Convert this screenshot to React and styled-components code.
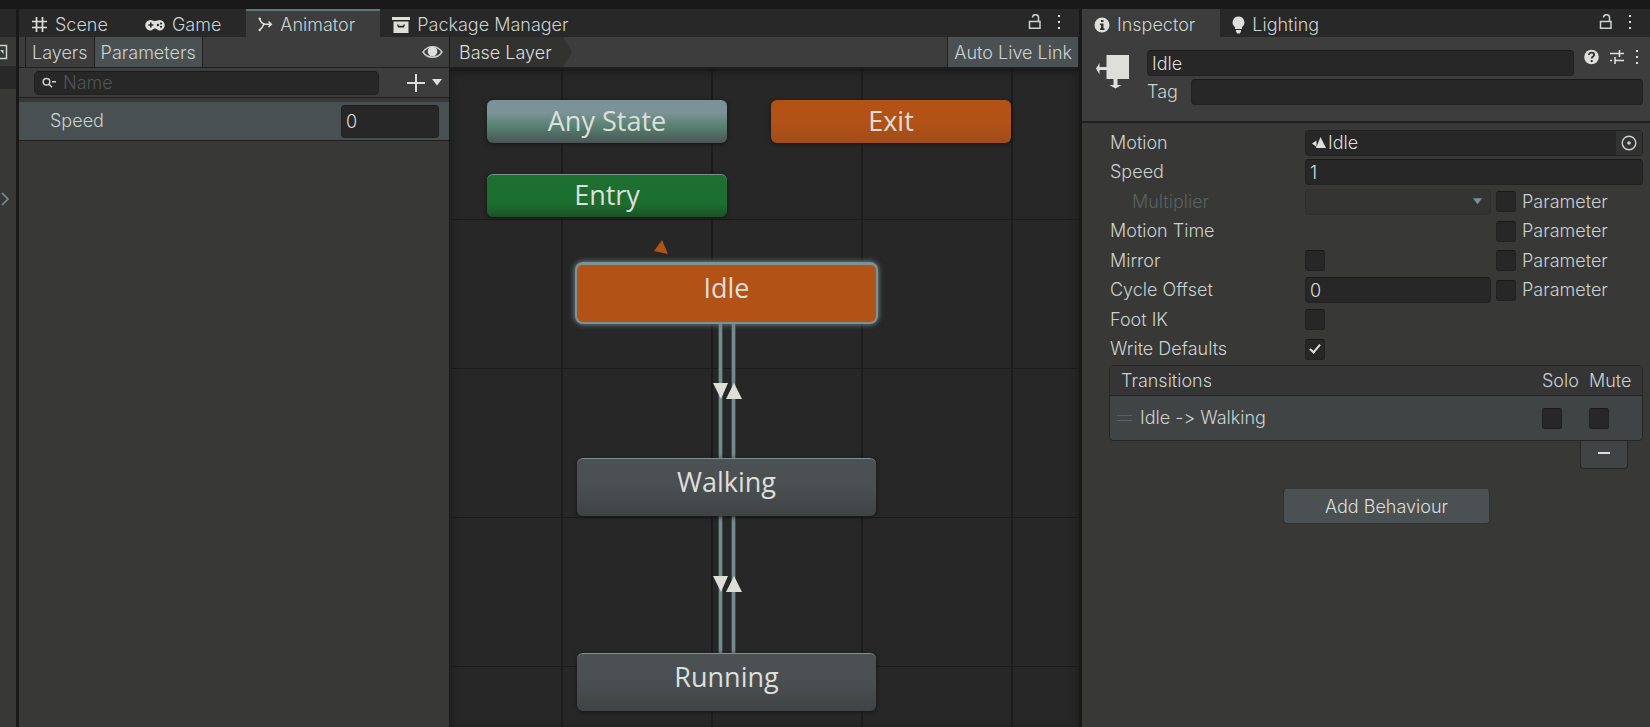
import React from "react";
import styled, { createGlobalStyle, css } from "styled-components";

const c = {
  edge: "#191919",
  strip: "#282828",
  panel: "#383836",
  bar: "#3c3d3c",
  line: "#1f1f1f",
  field: "#272727",
  select: "#4b5153",
  text: "#cbd2d1",
  bright: "#dededa",
  dim: "#5a6062",
  steel: "#7b9396",
  orange: "#b25217",
};

const GlobalStyle = createGlobalStyle`
  *, *::before, *::after { box-sizing: border-box; }
  body {
    margin: 0;
    background: ${c.edge};
    color: ${c.text};
    font: 300 18px/24px Inter, "Liberation Sans", sans-serif;
    font-feature-settings: "calt" 0;
  }
  button, input, select { font: inherit; color: inherit; }
  svg { display: block; flex: none; }
`;

const Editor = styled.div`
  display: grid;
  grid-template-columns: 16px minmax(0, 1060fr) minmax(0, 568fr);
  column-gap: 3px;
  min-height: 100vh;
  padding-top: 9px;
`;

const Window = styled.section`
  display: flex;
  flex-direction: column;
  min-width: 0;
  background: ${c.panel};
`;

const Dock = styled.aside`
  display: flex;
  flex-direction: column;
  overflow: hidden;
  background: ${c.panel};
`;

const DockCell = styled.div`
  display: flex;
  align-items: center;
  flex: none;
  height: ${(p) => p.$height}px;
  background: ${(p) => (p.$dark ? c.strip : "transparent")};
`;

const TabStrip = styled.div`
  display: flex;
  flex: none;
  height: 28px;
  background: ${c.strip};
`;

const Tab = styled.button`
  display: flex;
  align-items: center;
  gap: 7px;
  height: 28px;
  padding: 1px 25px 0 12px;
  border: 0;
  border-top: 2px solid transparent;
  background: transparent;
  white-space: nowrap;
  ${(p) =>
    p.$active &&
    css`
      background: ${c.bar};
      border-top-color: ${p.$focus ? "#657476" : c.bar};
    `}
`;

const StripTools = styled.div`
  display: flex;
  align-items: center;
  gap: 15px;
  margin-left: auto;
  padding: 0 18px 3px 0;
`;

const IconButton = styled.button`
  display: flex;
  align-items: center;
  padding: 0;
  border: 0;
  background: transparent;
`;

const AnimatorBody = styled.div`
  display: grid;
  grid-template-columns: minmax(0, 430fr) minmax(0, 629fr);
  flex: 1;
  column-gap: 1px;
  background: ${c.edge};
`;

const Pane = styled.div`
  display: flex;
  flex-direction: column;
  min-width: 0;
  background: ${c.panel};
`;

const Toolbar = styled.div`
  display: flex;
  flex: none;
  height: 31px;
  padding-left: ${(p) => p.$inset || 0}px;
  background: ${c.bar};
  border-bottom: 1px solid ${c.line};
`;

const ToolButton = styled.button`
  padding: 2px 6px 0;
  border: solid ${c.line};
  border-width: 0 1px;
  background: ${(p) => (p.$on ? c.select : "transparent")};
  white-space: nowrap;
  & + & { border-left: 0; }
`;

const EyeSlot = styled(IconButton)`
  margin-left: auto;
  padding-right: 6px;
`;

const SearchRow = styled.div`
  display: flex;
  align-items: center;
  flex: none;
  height: 30px;
  padding: 0 7px 0 15px;
  background: ${c.bar};
  border-bottom: 1px solid ${c.line};
`;

const SearchBox = styled.label`
  display: flex;
  align-items: center;
  flex: 1;
  gap: 7px;
  height: 24px;
  margin-right: 28px;
  padding: 0 7px;
  border: 1px solid #222222;
  border-top-color: #1a1a1a;
  border-radius: 5px;
  background: ${c.field};
`;

const SearchInput = styled.input`
  flex: 1;
  min-width: 0;
  padding: 0;
  border: 0;
  outline: 0;
  background: transparent;
  &::placeholder { color: #4f5557; opacity: 1; }
`;

const AddButton = styled(IconButton)`
  gap: 7px;
`;

const ParameterRow = styled.label`
  display: flex;
  align-items: center;
  justify-content: space-between;
  flex: none;
  height: 39px;
  margin-top: 4px;
  padding: 0 10px 0 31px;
  background: #495052;
  border-bottom: 1px solid ${c.line};
`;

const Field = styled.input`
  min-width: 0;
  width: ${(p) => (p.$width ? p.$width + "px" : "auto")};
  flex: ${(p) => (p.$width ? "none" : 1)};
  height: ${(p) => p.$height || 26}px;
  padding: 0 4px;
  border: 1px solid #222222;
  border-top-color: #1a1a1a;
  border-radius: 4px;
  outline: 0;
  background: ${c.field};
  color: ${c.bright};
`;

const Crumb = styled.div`
  display: flex;
  color: ${c.bright};
`;

const CrumbLabel = styled.span`
  padding: 4px 7px 0 9px;
  background: #323231;
`;

const LiveLink = styled(ToolButton)`
  margin-left: auto;
`;

const Graph = styled.div`
  position: relative;
  flex: 1;
  min-height: 659px;
  overflow: hidden;
  background-color: #272727;
  background-image:
    linear-gradient(90deg, #1c1c1c 2px, transparent 2px),
    linear-gradient(#1c1c1c 1px, transparent 1px);
  background-size: 150px 149px;
  background-position: 111px 151px;
  box-shadow: inset 0 3px 8px ${c.edge};
`;

const Edges = styled.svg`
  position: absolute;
  inset: 0;
`;

const tones = {
  any: "linear-gradient(#7b9396 0%, #7b9396 28%, #55806f 62%, #4b5354 100%)",
  entry: "linear-gradient(#1c7030 0%, #1c6e2f 70%, #1b5027 100%)",
  exit: `linear-gradient(${c.orange} 0%, ${c.orange} 50%, #a04c1a 100%)`,
  current: c.orange,
  state: "linear-gradient(#4c5254 0%, #4a5052 45%, #404344 100%)",
};

const Node = styled.button`
  position: absolute;
  left: ${(p) => p.$x}px;
  top: ${(p) => p.$y}px;
  width: ${(p) => (p.$large ? 299 : 240)}px;
  height: ${(p) => (p.$large ? 58 : 43)}px;
  padding: ${(p) => (p.$large ? "0 0 11px" : "0 0 3px")};
  border: 0;
  border-top: 1px solid ${(p) => (p.$tone === "exit" ? c.orange : c.steel)};
  border-radius: 6px;
  background: ${(p) => tones[p.$tone]};
  box-shadow: ${(p) =>
    p.$tone === "current"
      ? `0 0 0 2px ${c.steel}, 0 0 5px 3px #657879`
      : "0 1px 4px #151515"};
  color: ${c.bright};
  font: 400 27px/32px "Open Sans", "Noto Sans", sans-serif;
`;

const InspectorHead = styled.header`
  display: flex;
  flex: none;
  gap: 17px;
  height: 86px;
  padding: 13px 7px 0 14px;
  background: ${c.bar};
  border-bottom: 2px solid ${c.line};
`;

const HeadFields = styled.div`
  display: flex;
  flex-direction: column;
  flex: 1;
  gap: 3px;
  min-width: 0;
`;

const HeadLine = styled.div`
  display: flex;
  align-items: center;
  gap: ${(p) => p.$gap}px;
`;

const HeadTools = styled.div`
  display: flex;
  align-items: center;
  gap: 10px;
  height: 26px;
  padding: 0 4px 12px 0;
`;

const StateGlyph = styled.div`
  padding-top: 4px;
`;

const Properties = styled.div`
  display: grid;
  grid-template-rows: repeat(8, 1fr);
  height: 236px;
  margin: 5px 7px 1px 28px;
`;

const Property = styled.div`
  display: grid;
  grid-template-columns: 195px minmax(0, 1fr) 147px;
  align-items: center;
`;

const PropertyName = styled.label`
  padding-left: ${(p) => (p.$nested ? 22 : 0)}px;
  color: ${(p) => (p.$nested ? c.dim : c.text)};
`;

const Value = styled.div`
  display: flex;
  min-width: 0;
  grid-column: ${(p) => (p.$wide ? "2 / 4" : "2")};
  padding-right: ${(p) => (p.$wide ? 0 : 5)}px;
`;

const ParameterToggle = styled.label`
  display: flex;
  align-items: center;
  gap: 6px;
  grid-column: 3;
`;

const Check = styled.input.attrs({ type: "checkbox" })`
  appearance: none;
  display: grid;
  place-items: center;
  flex: none;
  width: 20px;
  height: 21px;
  margin: 0;
  border: 1px solid #222222;
  border-top-color: #191919;
  border-radius: 3px;
  background: ${c.field};
  &:checked::before {
    content: "";
    width: 6px;
    height: 11px;
    margin-bottom: 4px;
    border: solid ${c.bright};
    border-width: 0 2px 2px 0;
    transform: rotate(40deg);
  }
`;

const ObjectField = styled.div`
  display: flex;
  align-items: center;
  flex: 1;
  gap: 2px;
  height: 26px;
  padding-left: 6px;
  border: 1px solid #222222;
  border-radius: 4px;
  background: ${c.field};
`;

const ObjectName = styled.input`
  flex: 1;
  min-width: 0;
  padding: 0;
  border: 0;
  outline: 0;
  background: transparent;
  color: ${c.bright};
`;

const Picker = styled(IconButton)`
  height: 24px;
  padding: 0 5px;
  background: #323232;
`;

const DropShell = styled.div`
  display: flex;
  align-items: center;
  flex: 1;
  height: 26px;
  padding-right: 8px;
  border: 1px solid #2f2f2f;
  border-radius: 4px;
  background: #343433;
`;

const DropSelect = styled.select`
  appearance: none;
  flex: 1;
  min-width: 0;
  border: 0;
  background: transparent;
`;

const Transitions = styled.table`
  margin: 0 7px 0 27px;
  border: 1px solid #252525;
  border-radius: 4px;
  border-spacing: 0;
  background: #414444;
`;

const HeadCell = styled.th`
  width: ${(p) => (p.$width ? p.$width + "px" : "auto")};
  height: 30px;
  padding: 0 0 0 ${(p) => p.$pad || 0}px;
  border-bottom: 1px solid #252525;
  background: #353535;
  font-weight: inherit;
  text-align: left;
`;

const BodyCell = styled.td`
  height: 44px;
  padding: 0 0 0 ${(p) => p.$pad || 0}px;
`;

const TransitionName = styled.div`
  display: flex;
  align-items: center;
  gap: 8px;
`;

const RemoveButton = styled.button`
  display: flex;
  align-items: center;
  justify-content: center;
  align-self: flex-end;
  width: 48px;
  height: 28px;
  margin-right: 22px;
  padding: 0 0 4px;
  border: 1px solid #252525;
  border-top: 0;
  border-radius: 0 0 4px 4px;
  background: #414444;
`;

const BehaviourRow = styled.div`
  display: flex;
  justify-content: center;
  padding: 20px 0 24px 41px;
`;

const AddBehaviour = styled.button`
  width: 207px;
  height: 35px;
  padding: 0;
  border: 1px solid #303030;
  border-top-color: #4b5153;
  border-radius: 4px;
  background: ${c.select};
  color: ${c.bright};
`;

const SceneIcon = () => (
  <svg width="17" height="17" viewBox="0 0 17 17" stroke={c.bright} strokeWidth="1.7">
    <path d="M5.5 1v15M11.5 1v15M1 5.5h15M1 11.5h15" />
  </svg>
);

const GameIcon = () => (
  <svg width="20" height="12" viewBox="0 0 20 12">
    <path fill={c.bright} fillRule="evenodd" d="M5.5 1C7 1 7.500 2 10 2s3-1 4.500-1A5.200 5.200 0 0 1 14.500 11.500C12.500 11.500 12 9.500 10 9.500s-2.500 2-4.500 2A5.200 5.200 0 0 1 5.500 1ZM5 3.500v1.700H3.300v1.600H5v1.700h1.600V6.800h1.700V5.200H6.600V3.500Z" />
    <circle cx="13" cy="6" r="1.200" fill={c.strip} />
    <circle cx="16" cy="4.500" r="1.100" fill={c.strip} />
    <circle cx="16" cy="7.800" r="1.100" fill={c.strip} />
  </svg>
);

const AnimatorIcon = () => (
  <svg width="15" height="16" viewBox="0 0 15 16" fill="none" stroke={c.bright} strokeWidth="1.500">
    <path d="M1.500 1.500C2.500 5 4.500 7 7.500 7.200H13M1.500 13C3.500 11.500 5 9.500 6 7M10.500 4.500l2.800 2.700-2.800 2.700" />
    <circle cx="1.700" cy="1.700" r="1.200" fill={c.bright} stroke="none" />
    <circle cx="1.700" cy="13" r="1.200" fill={c.bright} stroke="none" />
  </svg>
);

const PackageIcon = () => (
  <svg width="18" height="16" viewBox="0 0 18 16" fill={c.bright}>
    <path d="M0 0h18v3H0Z" />
    <path fillRule="evenodd" d="M1.500 4.500h15V16h-15ZM5 7.500l1 3h6l1-3h-1.700v1.200H6.700V7.500Z" />
  </svg>
);

const InfoIcon = () => (
  <svg width="16" height="16" viewBox="0 0 16 16">
    <circle cx="8" cy="8" r="7.500" fill={c.bright} />
    <path d="M7 3h2.500v2H7ZM6 6.500h3.500v4.800h1V13H6v-1.700h1V8.200H6Z" fill="#333" />
  </svg>
);

const BulbIcon = () => (
  <svg width="13" height="18" viewBox="0 0 13 18" fill={c.bright}>
    <path d="M6.500.5a6 6 0 0 1 3.500 10.800V13H3v-1.700A6 6 0 0 1 6.500.5ZM4 14h5v1.500L7.800 17.500H5.200L4 15.500Z" />
  </svg>
);

const LockIcon = () => (
  <svg width="14" height="16" viewBox="0 0 14 16" fill="none" stroke={c.text} strokeWidth="1.500">
    <path d="M1.500 7.500H12v6.700H1.500ZM10.500 7V4a3 3 0 0 0-6-.5" />
  </svg>
);

const DotsIcon = () => (
  <svg width="4" height="16" viewBox="0 0 4 16" fill={c.bright}>
    <path d="M1 1h2v2H1ZM1 7h2v2H1ZM1 13h2v2H1Z" />
  </svg>
);

const EyeIcon = () => (
  <svg width="21" height="14" viewBox="0 0 21 14">
    <path d="M1 7c4.500-7 14.500-7 19 0-4.500 7-14.500 7-19 0Z" fill="none" stroke={c.text} strokeWidth="1.400" />
    <circle cx="10.500" cy="6.500" r="4.800" fill={c.bright} />
  </svg>
);

const SearchIcon = () => (
  <svg width="14" height="12" viewBox="0 0 14 12" fill="none" stroke={c.text} strokeWidth="1.500">
    <circle cx="4.500" cy="4.800" r="3.300" />
    <path d="M7 7.200l3 3M10 4.800h4" />
  </svg>
);

const PlusIcon = () => (
  <svg width="18" height="18" viewBox="0 0 18 18" stroke={c.bright} strokeWidth="2">
    <path d="M9 0v18M0 9h18" />
  </svg>
);

const CaretIcon = ({ color = c.bright, size = 10 }) => (
  <svg width={size} height="7" viewBox="0 0 10 7" fill={color}>
    <path d="M0 0h10L5 6.500Z" />
  </svg>
);

const StateIcon = () => (
  <svg width="34" height="36" viewBox="0 0 34 36" fill={c.bright}>
    <path d="M10.500 1H33v24H10.500ZM0 14.500 3.500 9v4h7v3h-7v4.500ZM17.500 25h4v6h4L19.500 34.500 13.500 31h4Z" />
  </svg>
);

const HelpIcon = () => (
  <svg width="15" height="16" viewBox="0 0 15 16">
    <circle cx="7.500" cy="8" r="7.300" fill={c.bright} />
    <path d="M5 6c0-3.500 5.200-3 5.200-.2 0 1.700-2.500 1.800-2.500 3.700M7.700 11v2" fill="none" stroke="#303030" strokeWidth="1.800" />
  </svg>
);

const PresetIcon = () => (
  <svg width="16" height="16" viewBox="0 0 16 16" fill="none" stroke={c.bright} strokeWidth="1.600">
    <path d="M1 4.500h9M10 4.500h5M10.500 1v7M1 11.500h2M6 11.500h9M6 8v7" />
  </svg>
);

const MotionIcon = () => (
  <svg width="14" height="13" viewBox="0 0 14 13" fill={c.bright}>
    <path d="M8.500 1 14 12H4ZM0 7.500l4.500-3V11Z" />
  </svg>
);

const TargetIcon = () => (
  <svg width="16" height="16" viewBox="0 0 16 16" fill="none" stroke={c.text} strokeWidth="1.400">
    <circle cx="8" cy="8" r="6.800" />
    <circle cx="8" cy="8" r="1.800" fill={c.text} stroke="none" />
  </svg>
);

const states = [
  { name: "Any State", x: 37, y: 32, tone: "any" },
  { name: "Exit", x: 321, y: 32, tone: "exit" },
  { name: "Entry", x: 37, y: 106, tone: "entry" },
  { name: "Idle", x: 127, y: 196, tone: "current", large: true },
  { name: "Walking", x: 127, y: 390, tone: "state", large: true },
  { name: "Running", x: 127, y: 585, tone: "state", large: true },
];

const StateGraph = () => (
  <Graph>
    <Edges width="100%" height="100%">
      <g stroke="#3f4a4b" strokeWidth="5">
        <path d="M270.500 240V600M283.500 240V600" />
      </g>
      <g stroke="#738b8d" strokeWidth="3">
        <path d="M270.500 240V600M283.500 240V600" />
      </g>
      <g fill={c.bright}>
        <path d="M263 315h15l-7 16ZM276 331h16l-8-16ZM263 508h15l-7 16ZM276 524h16l-8-16Z" />
      </g>
      <path d="M212 172l6 14-14-3Z" fill={c.orange} />
    </Edges>
    {states.map((s) => (
      <Node key={s.name} $x={s.x} $y={s.y} $tone={s.tone} $large={s.large}>
        {s.name}
      </Node>
    ))}
  </Graph>
);

const ParameterCheck = () => (
  <ParameterToggle>
    <Check />
    Parameter
  </ParameterToggle>
);

const WindowTools = () => (
  <StripTools>
    <IconButton aria-label="Lock"><LockIcon /></IconButton>
    <IconButton aria-label="More"><DotsIcon /></IconButton>
  </StripTools>
);

const Animator = () => (
  <Window>
    <TabStrip>
      <Tab><SceneIcon />Scene</Tab>
      <Tab><GameIcon />Game</Tab>
      <Tab $active $focus><AnimatorIcon />Animator</Tab>
      <Tab><PackageIcon />Package Manager</Tab>
      <WindowTools />
    </TabStrip>
    <AnimatorBody>
      <Pane>
        <Toolbar $inset={6}>
          <ToolButton>Layers</ToolButton>
          <ToolButton $on>Parameters</ToolButton>
          <EyeSlot aria-label="Toggle panel"><EyeIcon /></EyeSlot>
        </Toolbar>
        <SearchRow>
          <SearchBox>
            <SearchIcon />
            <SearchInput placeholder="Name" aria-label="Name" />
          </SearchBox>
          <AddButton aria-label="Add parameter"><PlusIcon /><CaretIcon /></AddButton>
        </SearchRow>
        <ParameterRow>
          Speed
          <Field $width={98} $height={33} defaultValue="0" />
        </ParameterRow>
      </Pane>
      <Pane>
        <Toolbar>
          <Crumb>
            <CrumbLabel>Base Layer</CrumbLabel>
            <svg width="13" height="30" viewBox="0 0 13 30" fill="#323231">
              <path d="M0 0h4l9 15-9 15H0Z" />
            </svg>
          </Crumb>
          <LiveLink $on>Auto Live Link</LiveLink>
        </Toolbar>
        <StateGraph />
      </Pane>
    </AnimatorBody>
  </Window>
);

const Inspector = () => (
  <Window>
    <TabStrip>
      <Tab $active><InfoIcon />Inspector</Tab>
      <Tab><BulbIcon />Lighting</Tab>
      <WindowTools />
    </TabStrip>
    <InspectorHead>
      <StateGlyph><StateIcon /></StateGlyph>
      <HeadFields>
        <HeadLine $gap={10}>
          <Field aria-label="State name" defaultValue="Idle" />
          <HeadTools>
            <IconButton aria-label="Help"><HelpIcon /></IconButton>
            <IconButton aria-label="Presets"><PresetIcon /></IconButton>
            <IconButton aria-label="More"><DotsIcon /></IconButton>
          </HeadTools>
        </HeadLine>
        <HeadLine $gap={13}>
          <label htmlFor="tag">Tag</label>
          <Field id="tag" />
        </HeadLine>
      </HeadFields>
    </InspectorHead>
    <Properties>
      <Property>
        <PropertyName htmlFor="motion">Motion</PropertyName>
        <Value $wide>
          <ObjectField>
            <MotionIcon />
            <ObjectName id="motion" defaultValue="Idle" />
            <Picker aria-label="Pick motion"><TargetIcon /></Picker>
          </ObjectField>
        </Value>
      </Property>
      <Property>
        <PropertyName htmlFor="speed">Speed</PropertyName>
        <Value $wide><Field id="speed" defaultValue="1" /></Value>
      </Property>
      <Property>
        <PropertyName $nested htmlFor="multiplier">Multiplier</PropertyName>
        <Value>
          <DropShell>
            <DropSelect id="multiplier" disabled />
            <CaretIcon color={c.steel} size={9} />
          </DropShell>
        </Value>
        <ParameterCheck />
      </Property>
      <Property>
        <PropertyName as="span">Motion Time</PropertyName>
        <ParameterCheck />
      </Property>
      <Property>
        <PropertyName htmlFor="mirror">Mirror</PropertyName>
        <Value><Check id="mirror" /></Value>
        <ParameterCheck />
      </Property>
      <Property>
        <PropertyName htmlFor="offset">Cycle Offset</PropertyName>
        <Value><Field id="offset" defaultValue="0" /></Value>
        <ParameterCheck />
      </Property>
      <Property>
        <PropertyName htmlFor="footik">Foot IK</PropertyName>
        <Value><Check id="footik" /></Value>
      </Property>
      <Property>
        <PropertyName htmlFor="defaults">Write Defaults</PropertyName>
        <Value><Check id="defaults" defaultChecked /></Value>
      </Property>
    </Properties>
    <Transitions>
      <thead>
        <tr>
          <HeadCell $pad={11}>Transitions</HeadCell>
          <HeadCell $width={47}>Solo</HeadCell>
          <HeadCell $width={53}>Mute</HeadCell>
        </tr>
      </thead>
      <tbody>
        <tr>
          <BodyCell $pad={7}>
            <TransitionName>
              <svg width="15" height="7" viewBox="0 0 15 7" fill={c.dim}>
                <path d="M0 0h15v1H0ZM0 5h15v1H0Z" />
              </svg>
              {"Idle -> Walking"}
            </TransitionName>
          </BodyCell>
          <BodyCell><Check aria-label="Solo" /></BodyCell>
          <BodyCell><Check aria-label="Mute" /></BodyCell>
        </tr>
      </tbody>
    </Transitions>
    <RemoveButton aria-label="Remove transition">
      <svg width="12" height="2" viewBox="0 0 12 2" fill={c.bright}><path d="M0 0h12v2H0Z" /></svg>
    </RemoveButton>
    <BehaviourRow>
      <AddBehaviour>Add Behaviour</AddBehaviour>
    </BehaviourRow>
  </Window>
);

export default function App() {
  return (
    <>
      <GlobalStyle />
      <Editor>
        <Dock>
          <DockCell $height={28} $dark />
          <DockCell $height={29}>
            <svg width="8" height="16" viewBox="0 0 8 16" fill="none" stroke={c.text} strokeWidth="1.500">
              <path d="M0 1.500h6.500v13H0" />
              <path d="M0 6h3.500v4Z" fill={c.text} stroke="none" />
            </svg>
          </DockCell>
          <DockCell $height={23} $dark />
          <DockCell $height={220}>
            <svg width="10" height="14" viewBox="0 0 10 14" fill="none" stroke={c.steel} strokeWidth="1.500">
              <path d="M2 1l6 6-6 6" />
            </svg>
          </DockCell>
        </Dock>
        <Animator />
        <Inspector />
      </Editor>
    </>
  );
}
